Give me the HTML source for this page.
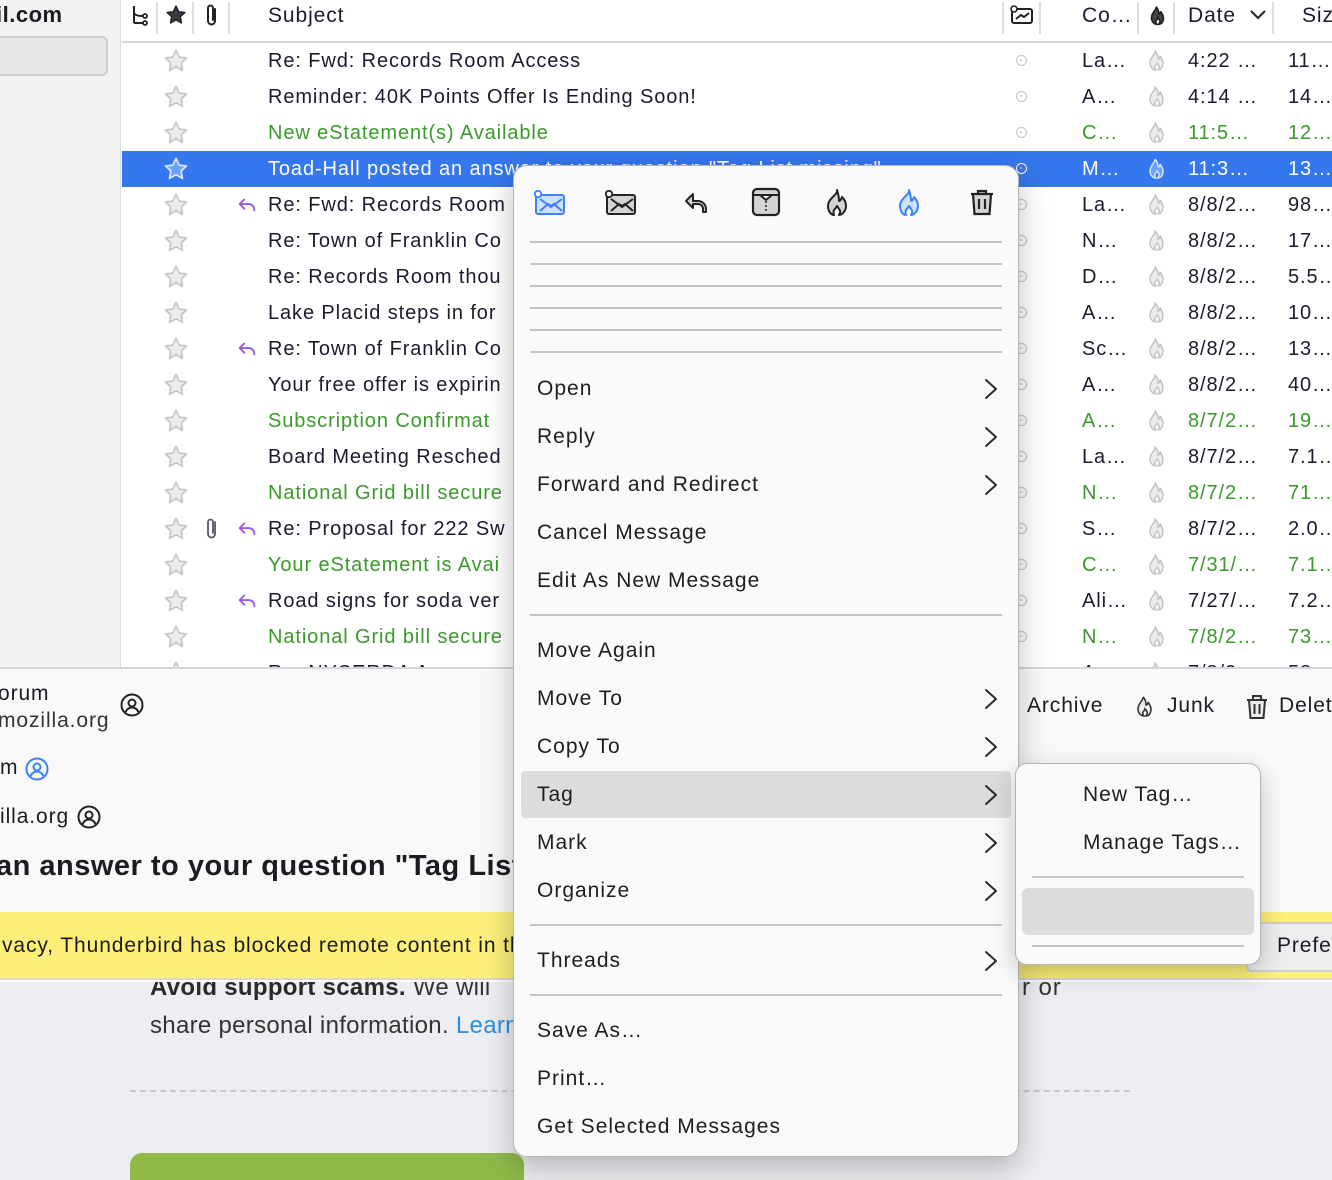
<!DOCTYPE html>
<html style="overflow:hidden"><head><meta charset="utf-8">
<style>
*{box-sizing:border-box;margin:0;padding:0}
html,body{width:1332px;height:1180px;overflow:hidden}
body{position:relative;background:#fff;font-family:"Liberation Sans",sans-serif;color:#1c1b2e;font-size:20px;letter-spacing:.9px}
#w{position:relative;width:1332px;height:1180px;overflow:hidden}
.a{position:absolute;white-space:nowrap}
.r{position:absolute;left:122px;width:1210px;height:36px;line-height:36px;overflow:hidden}
.r .a{top:0}
.g{color:#3a9a2a}
.sel{background:#3577ee;color:#fff}
.star{position:absolute;left:41px;top:5px;width:26px;height:26px}
.dot{position:absolute;left:894px;top:12px;width:11px;height:11px;border:1.5px solid #c2c2c6;border-radius:50%}
.dot:after{content:"";position:absolute;left:3px;top:3px;width:2px;height:2px;background:#c2c2c6;border-radius:50%}
.fl{position:absolute;left:1022px;top:6px;width:24px;height:24px}
.mi{position:absolute;left:537px;font-size:21px;color:#1e1e1e;letter-spacing:1px}
.chev{position:absolute;left:984px;width:14px;height:22px}
.sep{position:absolute;left:530px;width:472px;height:2px;background:#c3c3c5}
.clip{overflow:hidden}
</style></head><body><div id="w">
<svg width="0" height="0" style="position:absolute">
<defs>
<symbol id="st" viewBox="0 0 24 24"><path d="M12 2.2l2.9 6.2 6.8.8-5 4.7 1.3 6.8L12 17.3l-6 3.4 1.3-6.8-5-4.7 6.8-.8z" fill="#ededf0" stroke="#c6c6ca" stroke-width="1.6" stroke-linejoin="round"/></symbol>
<symbol id="fire" viewBox="0 0 24 24"><path d="M11 2c1 3-5 6-5 12 0 4 3 7 6 7 0 0-2-2-1-4 1-1 2-2 2-3 1 1 3 3 2 5-.5 1-1 2-1 2 3 0 5-3 5-7 0-3-2-5-3-7 0 2-1 3-2 3 0-3-1-6-3-8z" fill="#ececee" stroke="#c4c4c8" stroke-width="1.5" stroke-linejoin="round"/></symbol>
<symbol id="rep" viewBox="0 0 24 24"><path d="M9 6L4 11l5 5M4 11h10a6 6 0 016 6v1" fill="none" stroke="#9a5ae0" stroke-width="2" stroke-linecap="round" stroke-linejoin="round"/></symbol>
<symbol id="chv" viewBox="0 0 14 22"><path d="M2 2l10 9-10 9" fill="none" stroke="#2a2a2a" stroke-width="2" stroke-linecap="round" stroke-linejoin="round"/></symbol>
</defs></svg>

<div class="a" style="left:0;top:0;width:121px;height:667px;background:#f3f3f4;border-right:1px solid #dcdce0"></div>
<div class="a clip" style="left:0;top:2px;width:121px;font-weight:bold;font-size:22px;color:#1c1b22;letter-spacing:.5px"><span style="margin-left:-4px">il.com</span></div>
<div class="a" style="left:0;top:36px;width:108px;height:40px;background:#e8e8ea;border:2px solid #cfcfd3;border-left:none;border-radius:0 6px 6px 0"></div>

<div class="a" style="left:122px;top:0;width:1210px;height:43px;background:#fff;border-bottom:2px solid #d6d6da"></div>
<div class="a" style="left:156px;top:2px;width:2px;height:32px;background:#dcdcdf"></div>
<div class="a" style="left:192px;top:2px;width:2px;height:32px;background:#dcdcdf"></div>
<div class="a" style="left:228px;top:2px;width:2px;height:32px;background:#dcdcdf"></div>
<div class="a" style="left:1002px;top:2px;width:2px;height:32px;background:#dcdcdf"></div>
<div class="a" style="left:1039px;top:2px;width:2px;height:32px;background:#dcdcdf"></div>
<div class="a" style="left:1137px;top:2px;width:2px;height:32px;background:#dcdcdf"></div>
<div class="a" style="left:1173px;top:2px;width:2px;height:32px;background:#dcdcdf"></div>
<div class="a" style="left:1272px;top:2px;width:2px;height:32px;background:#dcdcdf"></div>
<svg class="a" style="left:131px;top:4px" width="20" height="24" viewBox="0 0 20 24"><path d="M3 2v17M3 8c0 3 4 4 9 4M3 19h9" fill="none" stroke="#222" stroke-width="2"/><circle cx="14" cy="12" r="2" fill="none" stroke="#222" stroke-width="1.8"/><circle cx="14" cy="19" r="2" fill="none" stroke="#222" stroke-width="1.8"/></svg>
<svg class="a" style="left:165px;top:4px" width="22" height="22" viewBox="0 0 24 24"><path d="M12 2.2l2.9 6.2 6.8.8-5 4.7 1.3 6.8L12 17.3l-6 3.4 1.3-6.8-5-4.7 6.8-.8z" fill="#3a3a46" stroke="#222" stroke-width="1.6" stroke-linejoin="round"/></svg>
<svg class="a" style="left:203px;top:3px" width="18" height="26" viewBox="0 0 18 26"><path d="M12 6v12a3.5 3.5 0 01-7 0V5a2.5 2.5 0 015 0v12" fill="none" stroke="#222" stroke-width="2" stroke-linecap="round"/></svg>
<div class="a" style="left:268px;top:4px;font-size:21px">Subject</div>
<svg class="a" style="left:1010px;top:5px" width="24" height="20" viewBox="0 0 24 20"><rect x="2" y="4" width="20" height="14" rx="2" fill="none" stroke="#222" stroke-width="2"/><path d="M6 14l5-4 3 2 5-4" fill="none" stroke="#222" stroke-width="2"/><circle cx="4" cy="4" r="3" fill="#fff" stroke="#222" stroke-width="1.6"/></svg>
<div class="a" style="left:1082px;top:4px;font-size:21px">Co…</div>
<svg class="a" style="left:1146px;top:4px" width="22" height="24" viewBox="0 0 24 24"><path d="M11 2c1 3-5 6-5 12 0 4 3 7 6 7 0 0-2-2-1-4 1-1 2-2 2-3 1 1 3 3 2 5-.5 1-1 2-1 2 3 0 5-3 5-7 0-3-2-5-3-7 0 2-1 3-2 3 0-3-1-6-3-8z" fill="#444" stroke="#222" stroke-width="1.8"/></svg>
<div class="a" style="left:1188px;top:4px;font-size:21px">Date</div>
<svg class="a" style="left:1249px;top:9px" width="18" height="12" viewBox="0 0 18 12"><path d="M2 2l7 7 7-7" fill="none" stroke="#222" stroke-width="2"/></svg>
<div class="a clip" style="left:1302px;top:4px;width:30px;font-size:21px">Siz</div>

<div class="r" style="top:43px"><svg class="star"><use href="#st"/></svg><div class="a" style="left:146px">Re: Fwd: Records Room Access</div><div class="dot"></div><div class="a" style="left:960px">La…</div><svg class="fl"><use href="#fire"/></svg><div class="a" style="left:1066px">4:22 …</div><div class="a" style="left:1166px">11…</div></div>
<div class="r" style="top:79px"><svg class="star"><use href="#st"/></svg><div class="a" style="left:146px">Reminder: 40K Points Offer Is Ending Soon!</div><div class="dot"></div><div class="a" style="left:960px">A…</div><svg class="fl"><use href="#fire"/></svg><div class="a" style="left:1066px">4:14 …</div><div class="a" style="left:1166px">14…</div></div>
<div class="r g" style="top:115px"><svg class="star"><use href="#st"/></svg><div class="a" style="left:146px">New eStatement(s) Available</div><div class="dot"></div><div class="a" style="left:960px">C…</div><svg class="fl"><use href="#fire"/></svg><div class="a" style="left:1066px">11:5…</div><div class="a" style="left:1166px">12…</div></div>
<div class="r sel" style="top:151px"><svg class="star" viewBox="0 0 24 24"><path d="M12 2.2l2.9 6.2 6.8.8-5 4.7 1.3 6.8L12 17.3l-6 3.4 1.3-6.8-5-4.7 6.8-.8z" fill="#6aa3ff" stroke="#d8e6ff" stroke-width="1.6" stroke-linejoin="round"/></svg><div class="a" style="left:146px">Toad-Hall posted an answer to your question "Tag List missing"</div><div class="dot" style="border-color:#fff"></div><div class="a" style="left:960px">M…</div><svg class="fl" viewBox="0 0 24 24"><path d="M11 2c1 3-5 6-5 12 0 4 3 7 6 7 0 0-2-2-1-4 1-1 2-2 2-3 1 1 3 3 2 5-.5 1-1 2-1 2 3 0 5-3 5-7 0-3-2-5-3-7 0 2-1 3-2 3 0-3-1-6-3-8z" fill="#6aa3ff" stroke="#d8e6ff" stroke-width="1.5"/></svg><div class="a" style="left:1066px">11:3…</div><div class="a" style="left:1166px">13…</div></div>
<div class="r" style="top:187px"><svg class="star"><use href="#st"/></svg><svg class="a" style="left:114px;top:7px" width="22" height="22"><use href="#rep"/></svg><div class="a" style="left:146px">Re: Fwd: Records Room</div><div class="dot"></div><div class="a" style="left:960px">La…</div><svg class="fl"><use href="#fire"/></svg><div class="a" style="left:1066px">8/8/2…</div><div class="a" style="left:1166px">98…</div></div>
<div class="r" style="top:223px"><svg class="star"><use href="#st"/></svg><div class="a" style="left:146px">Re: Town of Franklin Co</div><div class="dot"></div><div class="a" style="left:960px">N…</div><svg class="fl"><use href="#fire"/></svg><div class="a" style="left:1066px">8/8/2…</div><div class="a" style="left:1166px">17…</div></div>
<div class="r" style="top:259px"><svg class="star"><use href="#st"/></svg><div class="a" style="left:146px">Re: Records Room thou</div><div class="dot"></div><div class="a" style="left:960px">D…</div><svg class="fl"><use href="#fire"/></svg><div class="a" style="left:1066px">8/8/2…</div><div class="a" style="left:1166px">5.5…</div></div>
<div class="r" style="top:295px"><svg class="star"><use href="#st"/></svg><div class="a" style="left:146px">Lake Placid steps in for</div><div class="dot"></div><div class="a" style="left:960px">A…</div><svg class="fl"><use href="#fire"/></svg><div class="a" style="left:1066px">8/8/2…</div><div class="a" style="left:1166px">10…</div></div>
<div class="r" style="top:331px"><svg class="star"><use href="#st"/></svg><svg class="a" style="left:114px;top:7px" width="22" height="22"><use href="#rep"/></svg><div class="a" style="left:146px">Re: Town of Franklin Co</div><div class="dot"></div><div class="a" style="left:960px">Sc…</div><svg class="fl"><use href="#fire"/></svg><div class="a" style="left:1066px">8/8/2…</div><div class="a" style="left:1166px">13…</div></div>
<div class="r" style="top:367px"><svg class="star"><use href="#st"/></svg><div class="a" style="left:146px">Your free offer is expirin</div><div class="dot"></div><div class="a" style="left:960px">A…</div><svg class="fl"><use href="#fire"/></svg><div class="a" style="left:1066px">8/8/2…</div><div class="a" style="left:1166px">40…</div></div>
<div class="r g" style="top:403px"><svg class="star"><use href="#st"/></svg><div class="a" style="left:146px">Subscription Confirmat</div><div class="dot"></div><div class="a" style="left:960px">A…</div><svg class="fl"><use href="#fire"/></svg><div class="a" style="left:1066px">8/7/2…</div><div class="a" style="left:1166px">19…</div></div>
<div class="r" style="top:439px"><svg class="star"><use href="#st"/></svg><div class="a" style="left:146px">Board Meeting Resched</div><div class="dot"></div><div class="a" style="left:960px">La…</div><svg class="fl"><use href="#fire"/></svg><div class="a" style="left:1066px">8/7/2…</div><div class="a" style="left:1166px">7.1…</div></div>
<div class="r g" style="top:475px"><svg class="star"><use href="#st"/></svg><div class="a" style="left:146px">National Grid bill secure</div><div class="dot"></div><div class="a" style="left:960px">N…</div><svg class="fl"><use href="#fire"/></svg><div class="a" style="left:1066px">8/7/2…</div><div class="a" style="left:1166px">71…</div></div>
<div class="r" style="top:511px"><svg class="star"><use href="#st"/></svg><svg class="a" style="left:82px;top:6px" width="16" height="24" viewBox="0 0 16 24"><path d="M11 5v12a3.5 3.5 0 01-7 0V5a2.5 2.5 0 015 0v11" fill="none" stroke="#55556a" stroke-width="1.8" stroke-linecap="round"/></svg><svg class="a" style="left:114px;top:7px" width="22" height="22"><use href="#rep"/></svg><div class="a" style="left:146px">Re: Proposal for 222 Sw</div><div class="dot"></div><div class="a" style="left:960px">S…</div><svg class="fl"><use href="#fire"/></svg><div class="a" style="left:1066px">8/7/2…</div><div class="a" style="left:1166px">2.0…</div></div>
<div class="r g" style="top:547px"><svg class="star"><use href="#st"/></svg><div class="a" style="left:146px">Your eStatement is Avai</div><div class="dot"></div><div class="a" style="left:960px">C…</div><svg class="fl"><use href="#fire"/></svg><div class="a" style="left:1066px">7/31/…</div><div class="a" style="left:1166px">7.1…</div></div>
<div class="r" style="top:583px"><svg class="star"><use href="#st"/></svg><svg class="a" style="left:114px;top:7px" width="22" height="22"><use href="#rep"/></svg><div class="a" style="left:146px">Road signs for soda ver</div><div class="dot"></div><div class="a" style="left:960px">Ali…</div><svg class="fl"><use href="#fire"/></svg><div class="a" style="left:1066px">7/27/…</div><div class="a" style="left:1166px">7.2…</div></div>
<div class="r g" style="top:619px"><svg class="star"><use href="#st"/></svg><div class="a" style="left:146px">National Grid bill secure</div><div class="dot"></div><div class="a" style="left:960px">N…</div><svg class="fl"><use href="#fire"/></svg><div class="a" style="left:1066px">7/8/2…</div><div class="a" style="left:1166px">73…</div></div>
<div class="r" style="top:655px;height:12px"><svg class="star"><use href="#st"/></svg><div class="a" style="left:146px">Re: NYSERDA A</div><div class="a" style="left:960px">A…</div><svg class="fl"><use href="#fire"/></svg><div class="a" style="left:1066px">7/8/2…</div><div class="a" style="left:1166px">58…</div></div>

<div class="a" style="left:0;top:667px;width:1332px;height:245px;background:#f9f9fa;border-top:2px solid #d6d6da"></div>
<div class="a clip" style="left:0;top:682px;width:120px;font-size:21px;color:#1c1b22"><span style="margin-left:-2px">orum</span></div>
<div class="a clip" style="left:0;top:709px;width:120px;font-size:21px;color:#333"><span style="margin-left:-2px">mozilla.org</span></div>
<svg class="a" style="left:120px;top:693px" width="24" height="24" viewBox="0 0 24 24"><circle cx="12" cy="12" r="10.5" fill="none" stroke="#222" stroke-width="2"/><circle cx="12" cy="10" r="3.5" fill="none" stroke="#222" stroke-width="2"/><path d="M5.5 19c1.5-3 3.5-4.5 6.5-4.5s5 1.5 6.5 4.5" fill="none" stroke="#222" stroke-width="2"/></svg>
<div class="a" style="left:0;top:756px;font-size:21px;color:#1c1b22">m</div>
<svg class="a" style="left:25px;top:757px" width="24" height="24" viewBox="0 0 24 24"><circle cx="12" cy="12" r="10.5" fill="none" stroke="#3b82f6" stroke-width="2"/><circle cx="12" cy="10" r="3.5" fill="none" stroke="#3b82f6" stroke-width="2"/><path d="M5.5 19c1.5-3 3.5-4.5 6.5-4.5s5 1.5 6.5 4.5" fill="none" stroke="#3b82f6" stroke-width="2"/></svg>
<div class="a" style="left:0;top:805px;font-size:21px;color:#1c1b22">illa.org</div>
<svg class="a" style="left:77px;top:805px" width="24" height="24" viewBox="0 0 24 24"><circle cx="12" cy="12" r="10.5" fill="none" stroke="#222" stroke-width="2"/><circle cx="12" cy="10" r="3.5" fill="none" stroke="#222" stroke-width="2"/><path d="M5.5 19c1.5-3 3.5-4.5 6.5-4.5s5 1.5 6.5 4.5" fill="none" stroke="#222" stroke-width="2"/></svg>
<div class="a clip" style="left:0;top:850px;width:513px;font-size:29px;font-weight:bold;color:#1c1b22;letter-spacing:.5px"><span style="margin-left:-4px">an answer to your question "Tag List missing"</span></div>
<div class="a" style="left:1027px;top:694px;font-size:21px;color:#1c1b22">Archive</div>
<svg class="a" style="left:1132px;top:693px" width="24" height="28" viewBox="0 0 24 24"><path d="M11 2c1 3-5 6-5 12 0 4 3 7 6 7 0 0-2-2-1-4 1-1 2-2 2-3 1 1 3 3 2 5-.5 1-1 2-1 2 3 0 5-3 5-7 0-3-2-5-3-7 0 2-1 3-2 3 0-3-1-6-3-8z" fill="#ececee" stroke="#333" stroke-width="1.6"/></svg>
<div class="a" style="left:1167px;top:694px;font-size:21px;color:#1c1b22">Junk</div>
<svg class="a" style="left:1245px;top:693px" width="24" height="28" viewBox="0 0 24 28"><path d="M2 7h20M8 7V3h8v4M4 7l1.5 18h13L20 7M9.5 11v10M14.5 11v10" fill="#ececee" stroke="#333" stroke-width="2"/></svg>
<div class="a clip" style="left:1279px;top:694px;width:53px;font-size:21px;color:#1c1b22">Delete</div>

<div class="a" style="left:0;top:912px;width:1332px;height:68px;background:#fcef7a;border-bottom:2px solid #d8d8dc"></div>
<div class="a clip" style="left:2px;top:934px;width:511px;font-size:21px;color:#1c1b22">vacy, Thunderbird has blocked remote content in this message.</div>
<div class="a" style="left:1246px;top:922px;width:86px;height:50px;background:#ededef;border:2px solid #cfcfd3;border-right:none;border-radius:6px 0 0 6px"></div>
<div class="a clip" style="left:1277px;top:934px;width:55px;font-size:21px;color:#1c1b22">Preferences</div>

<div class="a" style="left:0;top:982px;width:1332px;height:198px;background:#eceef1"></div>
<div class="a" style="left:150px;top:982px;height:24px;overflow:hidden;font-size:24px;color:#333;line-height:24px;width:363px;letter-spacing:.3px"><b style="color:#2a2a2a;position:relative;top:-6px">Avoid support scams.</b> <span style="position:relative;top:-6px">We will</span></div>
<div class="a" style="left:1022px;top:982px;height:24px;overflow:hidden;font-size:24px;color:#333;line-height:24px"><span style="position:relative;top:-6px">r or</span></div>
<div class="a clip" style="left:150px;top:1012px;width:363px;font-size:24px;color:#333;letter-spacing:.3px">share personal information. <span style="color:#2d8ee0">Learn more</span></div>
<div class="a" style="left:130px;top:1090px;width:1000px;border-top:2px dashed #c8c8cc"></div>
<div class="a" style="left:130px;top:1153px;width:394px;height:27px;background:#8fba48;border-radius:12px 12px 0 0"></div>

<div class="a" style="left:513px;top:165px;width:506px;height:992px;background:#fafafa;border:1.5px solid #b4b4b8;border-radius:14px;box-shadow:0 10px 30px rgba(0,0,0,.25)"></div>
<svg class="a" style="left:534px;top:190px" width="32" height="26" viewBox="0 0 32 26"><rect x="2" y="5" width="28" height="19" rx="2" fill="#cfe0fb" stroke="#3b82f6" stroke-width="2"/><path d="M6 21l8-7 3 2 3-2 8 7M6 9l11 8 11-8" fill="none" stroke="#3b82f6" stroke-width="2"/><circle cx="4" cy="4" r="3.2" fill="#fff" stroke="#3b82f6" stroke-width="1.8"/></svg>
<svg class="a" style="left:605px;top:190px" width="32" height="26" viewBox="0 0 32 26"><rect x="2" y="5" width="28" height="19" rx="2" fill="#d4d4d4" stroke="#222" stroke-width="2"/><path d="M6 21l8-7 3 2 3-2 8 7M6 9l11 8 11-8" fill="none" stroke="#222" stroke-width="2"/><circle cx="4" cy="4" r="3.2" fill="#fff" stroke="#222" stroke-width="1.8"/></svg>
<svg class="a" style="left:683px;top:191px" width="26" height="24" viewBox="0 0 26 24"><path d="M10 3L3 10l7 7V13h5a5 5 0 015 5v3h3v-3a8 8 0 00-8-8h-5V3z" fill="#d4d4d4" stroke="#222" stroke-width="2" stroke-linejoin="round"/></svg>
<svg class="a" style="left:751px;top:187px" width="30" height="30" viewBox="0 0 30 30"><rect x="2" y="2" width="26" height="26" rx="4" fill="#d4d4d4" stroke="#222" stroke-width="2.2"/><path d="M3 8h24M9 8l6 5 6-5" fill="#fff" stroke="#222" stroke-width="2"/><path d="M15 14v12" stroke="#222" stroke-width="1.5" stroke-dasharray="2 2"/></svg>
<svg class="a" style="left:825px;top:188px" width="24" height="30" viewBox="0 0 24 28"><path d="M12 1c2 4-9 8-9 16 0 5 3 9 6 9 0 0-1-3 0-5 1-1 2-2 3-4 1 2 4 4 3 7l-1 2c3 0 7-4 7-9 0-4-2-7-4-9-1 3-2 4-3 4 0-4-1-8-2-11z" fill="#d4d4d4" stroke="#222" stroke-width="2" stroke-linejoin="round"/></svg>
<svg class="a" style="left:897px;top:188px" width="24" height="30" viewBox="0 0 24 28"><path d="M12 1c2 4-9 8-9 16 0 5 3 9 6 9 0 0-1-3 0-5 1-1 2-2 3-4 1 2 4 4 3 7l-1 2c3 0 7-4 7-9 0-4-2-7-4-9-1 3-2 4-3 4 0-4-1-8-2-11z" fill="#cfe0fb" stroke="#3b82f6" stroke-width="2" stroke-linejoin="round"/></svg>
<svg class="a" style="left:969px;top:187px" width="26" height="30" viewBox="0 0 26 30"><path d="M2 7h22M9 7V4h8v3M4 7l1.5 20h15L22 7M10 12v10M16 12v10" fill="#d4d4d4" stroke="#222" stroke-width="2.2"/></svg>
<div class="sep" style="top:241px"></div>
<div class="sep" style="top:263px"></div>
<div class="sep" style="top:285px"></div>
<div class="sep" style="top:307px"></div>
<div class="sep" style="top:329px"></div>
<div class="sep" style="top:351px"></div>
<div class="mi" style="top:377px">Open</div><svg class="chev" style="top:378px"><use href="#chv"/></svg>
<div class="mi" style="top:425px">Reply</div><svg class="chev" style="top:426px"><use href="#chv"/></svg>
<div class="mi" style="top:473px">Forward and Redirect</div><svg class="chev" style="top:474px"><use href="#chv"/></svg>
<div class="mi" style="top:521px">Cancel Message</div>
<div class="mi" style="top:569px">Edit As New Message</div>
<div class="sep" style="top:614px"></div>
<div class="mi" style="top:639px">Move Again</div>
<div class="mi" style="top:687px">Move To</div><svg class="chev" style="top:688px"><use href="#chv"/></svg>
<div class="mi" style="top:735px">Copy To</div><svg class="chev" style="top:736px"><use href="#chv"/></svg>
<div class="a" style="left:521px;top:771px;width:490px;height:47px;background:#dcdcdc;border-radius:4px"></div>
<div class="mi" style="top:783px">Tag</div><svg class="chev" style="top:784px"><use href="#chv"/></svg>
<div class="mi" style="top:831px">Mark</div><svg class="chev" style="top:832px"><use href="#chv"/></svg>
<div class="mi" style="top:879px">Organize</div><svg class="chev" style="top:880px"><use href="#chv"/></svg>
<div class="sep" style="top:924px"></div>
<div class="mi" style="top:949px">Threads</div><svg class="chev" style="top:950px"><use href="#chv"/></svg>
<div class="sep" style="top:994px"></div>
<div class="mi" style="top:1019px">Save As…</div>
<div class="mi" style="top:1067px">Print…</div>
<div class="mi" style="top:1115px">Get Selected Messages</div>

<div class="a" style="left:1015px;top:763px;width:246px;height:202px;background:#fafafa;border:1.5px solid #b4b4b8;border-radius:12px;box-shadow:0 8px 24px rgba(0,0,0,.22)"></div>
<div class="a" style="left:1083px;top:783px;font-size:21px;color:#1e1e1e;letter-spacing:1px">New Tag…</div>
<div class="a" style="left:1083px;top:831px;font-size:21px;color:#1e1e1e;letter-spacing:1px">Manage Tags…</div>
<div class="a" style="left:1032px;top:876px;width:212px;height:2px;background:#c3c3c5"></div>
<div class="a" style="left:1022px;top:888px;width:232px;height:47px;background:#dcdcdc;border-radius:6px"></div>
<div class="a" style="left:1032px;top:945px;width:212px;height:2px;background:#c3c3c5"></div>
</div></body></html>
